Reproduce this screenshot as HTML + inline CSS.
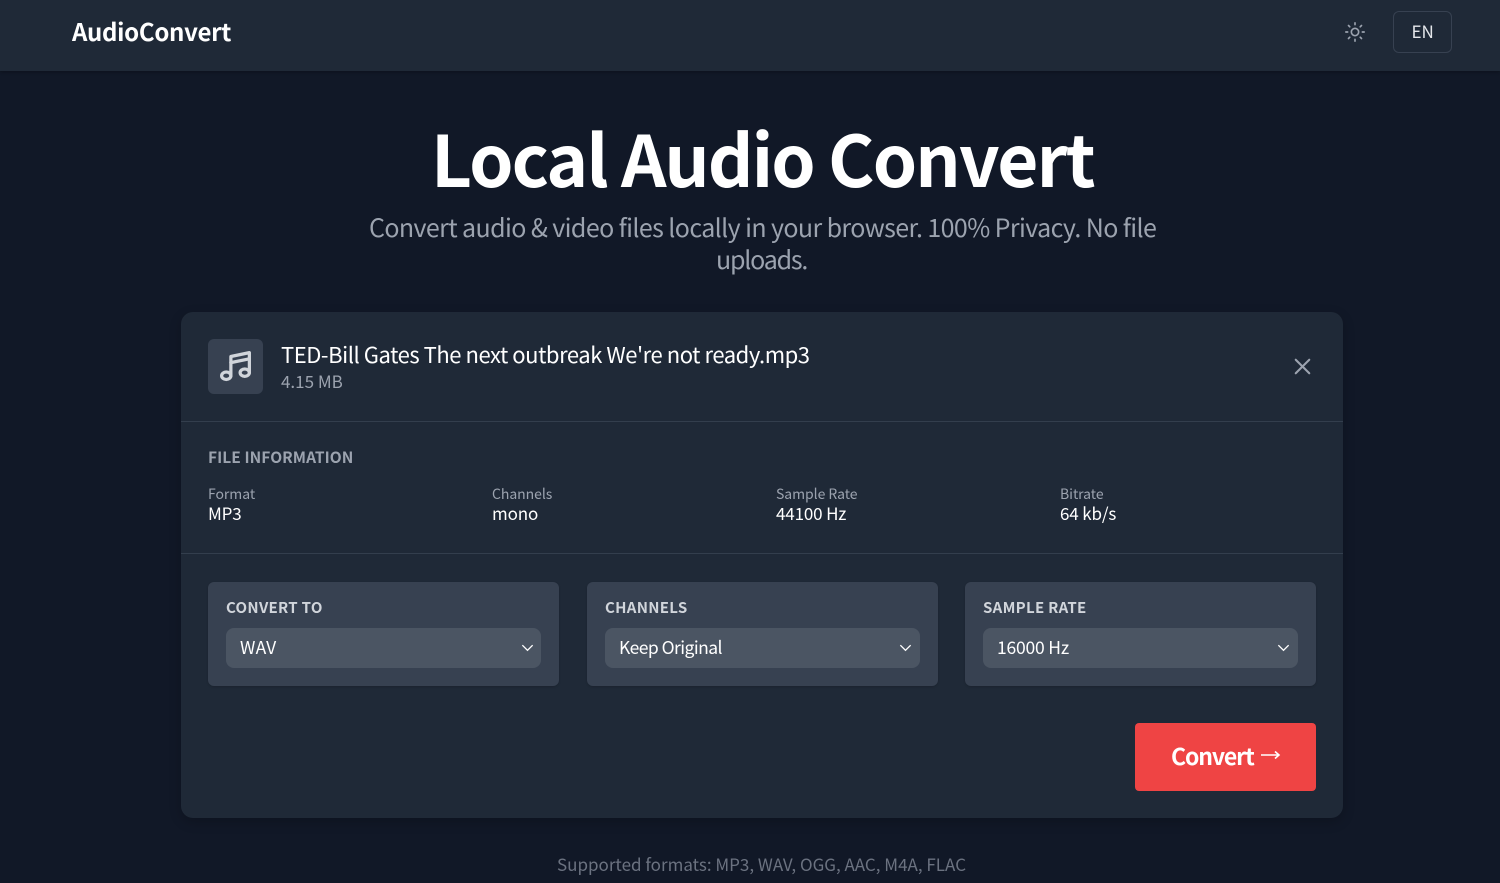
<!DOCTYPE html>
<html lang="en"><head><meta charset="utf-8"><title>AudioConvert</title>
<style>
html,body{margin:0;padding:0;width:1500px;height:883px;overflow:hidden;background:#111827}
body{position:relative;font-family:"Noto Sans CJK SC","Liberation Sans",sans-serif;color:#fff}
.a{position:absolute;white-space:nowrap;line-height:1}
.b{position:absolute;box-sizing:border-box}
.box{background:#374151;border-radius:6px;top:582px;width:351px;height:104px;box-shadow:0 1px 2px rgba(0,0,0,.15)}
.sel{background:#4b5563;border-radius:8px;top:628px;width:315px;height:40px}
.lab{font-size:15px;font-weight:700;color:#d1d5db;top:600px;letter-spacing:.3px}
.val{font-size:17.5px;top:639px;color:#fff;letter-spacing:-.2px}
.k{font-size:14px;color:#9ca3af;top:487px;letter-spacing:-.05px}
.v{font-size:17px;color:#fff;top:504px;letter-spacing:-.15px}
svg{position:absolute;display:block}
</style></head><body>
<div class="b" style="left:0;top:0;width:1500px;height:71px;background:#1f2937;box-shadow:0 1px 3px rgba(0,0,0,.3)"></div>
<div class="a" style="left:72px;top:19px;font-size:24px;font-weight:700;letter-spacing:-.3px">AudioConvert</div>
<svg style="left:1344px;top:21px" width="22" height="22" viewBox="0 0 24 24" fill="none" stroke="#9ca3af" stroke-width="1.8" stroke-linecap="round"><circle cx="12" cy="12" r="4"/><path d="M12 2v2M12 20v2M4.9 4.9l1.4 1.4M17.7 17.7l1.4 1.4M2 12h2M20 12h2M6.3 17.7l-1.4 1.4M19.1 4.9l-1.4 1.4"/></svg>
<div class="b" style="left:1393px;top:11px;width:59px;height:42px;border:1px solid #374151;border-radius:6px"></div>
<div class="a" style="left:1411.5px;top:22px;font-size:17px;color:#e5e7eb">EN</div>

<div class="a" style="left:431px;top:122px;font-size:71px;font-weight:700;letter-spacing:-1.9px">Local Audio Convert</div>
<div class="a" style="left:369px;top:215px;font-size:25px;color:#9ca3af;letter-spacing:-.6px">Convert audio &amp; video files locally in your browser. 100% Privacy. No file</div>
<div class="a" style="left:716px;top:247px;font-size:25px;color:#9ca3af;letter-spacing:-1.2px">uploads.</div>

<div class="b" style="left:181px;top:312px;width:1162px;height:506px;background:#1f2937;border-radius:12px;box-shadow:0 4px 12px rgba(0,0,0,.2)"></div>
<div class="b" style="left:208px;top:339px;width:55px;height:55px;background:#374151;border-radius:6px"></div>
<svg style="left:217px;top:348px" width="37" height="37" viewBox="0 0 24 24" fill="none" stroke="#d1d5db" stroke-width="2.1" stroke-linecap="round" stroke-linejoin="round"><path d="M9 18V5.5L21 3v13"/><path d="M9 9.5l12-2.5"/><ellipse cx="6" cy="18" rx="3" ry="2.4"/><ellipse cx="18" cy="16" rx="3" ry="2.4"/></svg>
<div class="a" style="left:281px;top:343px;font-size:22px;letter-spacing:-.45px">TED-Bill Gates The next outbreak We're not ready.mp3</div>
<div class="a" style="left:281px;top:372px;font-size:17px;color:#9ca3af">4.15 MB</div>
<svg style="left:1290px;top:354px" width="25" height="25" viewBox="0 0 24 24" fill="none" stroke="#9ca3af" stroke-width="2" stroke-linecap="round"><path d="M5.5 5.5l13 13M18.5 5.5l-13 13"/></svg>
<div class="b" style="left:181px;top:421px;width:1162px;height:1px;background:#333e4d"></div>
<div class="a" style="left:208px;top:450px;font-size:15.5px;font-weight:700;color:#9ca3af;letter-spacing:.05px">FILE INFORMATION</div>
<div class="a k" style="left:208px">Format</div><div class="a v" style="left:208px">MP3</div>
<div class="a k" style="left:492px">Channels</div><div class="a v" style="left:492px">mono</div>
<div class="a k" style="left:776px">Sample Rate</div><div class="a v" style="left:776px">44100 Hz</div>
<div class="a k" style="left:1060px">Bitrate</div><div class="a v" style="left:1060px">64 kb/s</div>
<div class="b" style="left:181px;top:553px;width:1162px;height:1px;background:#333e4d"></div>

<div class="b box" style="left:208px"></div><div class="b sel" style="left:226px"></div>
<div class="a lab" style="left:226px">CONVERT TO</div><div class="a val" style="left:240px;letter-spacing:.2px">WAV</div>
<svg style="left:520px;top:640px" width="15" height="15" viewBox="0 0 16 16" fill="none" stroke="#fff" stroke-width="1.4"><path d="M2.5 5.5L8 11l5.5-5.5"/></svg>

<div class="b box" style="left:587px"></div><div class="b sel" style="left:605px"></div>
<div class="a lab" style="left:605px">CHANNELS</div><div class="a val" style="left:619px;letter-spacing:-.55px">Keep Original</div>
<svg style="left:898px;top:640px" width="15" height="15" viewBox="0 0 16 16" fill="none" stroke="#fff" stroke-width="1.4"><path d="M2.5 5.5L8 11l5.5-5.5"/></svg>

<div class="b box" style="left:965px"></div><div class="b sel" style="left:983px"></div>
<div class="a lab" style="left:983px">SAMPLE RATE</div><div class="a val" style="left:997px">16000 Hz</div>
<svg style="left:1276px;top:640px" width="15" height="15" viewBox="0 0 16 16" fill="none" stroke="#fff" stroke-width="1.4"><path d="M2.5 5.5L8 11l5.5-5.5"/></svg>

<div class="b" style="left:1135px;top:723px;width:181px;height:67.5px;background:#ef4444;border-radius:4px"></div>
<div class="a" style="left:1171px;top:744px;font-size:23px;font-weight:700;letter-spacing:-1.1px">Convert</div>
<svg style="left:1259px;top:746px" width="22" height="18" viewBox="0 0 22 18" fill="none" stroke="#fff" stroke-width="1.6"><path d="M2 9h18M16 5.5L20 9l-4 3.5"/></svg>

<div class="a" style="left:557px;top:855px;font-size:17px;color:#6b7280">Supported formats: MP3, WAV, OGG, AAC, M4A, FLAC</div>
</body></html>
